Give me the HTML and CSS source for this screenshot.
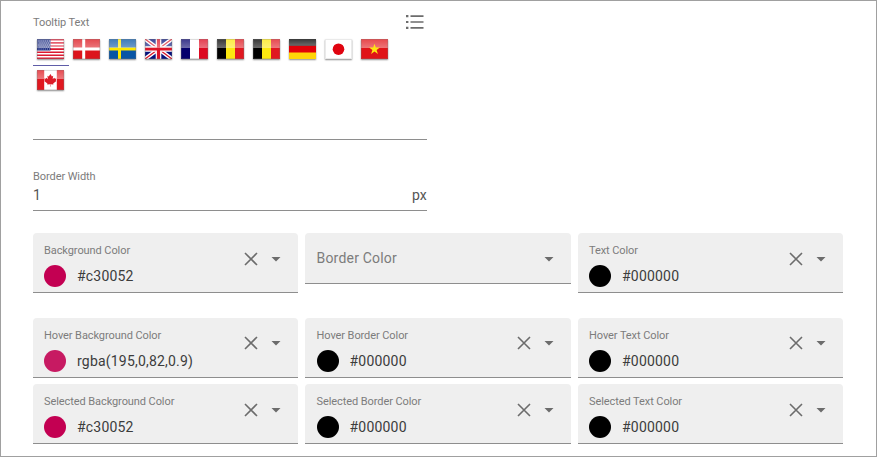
FILE: index.html
```
<!DOCTYPE html>
<html lang="en">
<head>
<meta charset="utf-8">
<title>Tooltip settings</title>
<link rel="stylesheet" href="styles.css">
</head>
<body>
<svg class="defs" aria-hidden="true">
  <defs>
    <linearGradient id="gloss" x1="0" y1="0" x2="0" y2="1">
      <stop offset="0" stop-color="#fff" stop-opacity=".22"/>
      <stop offset="1" stop-color="#fff" stop-opacity=".42"/>
    </linearGradient>
    <symbol id="shine" viewBox="0 0 27 20">
      <rect width="27" height="9" fill="url(#gloss)"/>
      <rect x=".5" y=".5" width="26" height="19" fill="none" stroke="#777" stroke-opacity=".25"/>
    </symbol>
    <symbol id="clear" viewBox="0 0 14 14"><path d="M1 1l12 12M13 1L1 13" fill="none" stroke="#6c6c6c" stroke-width="1.6"/></symbol>
    <symbol id="caret" viewBox="0 0 10 5"><path d="M.5 0h9L5 4.5z" fill="#6c6c6c"/></symbol>
  </defs>
</svg>
<main class="panel">
  <section class="tooltip-field">
    <header class="tooltip-head">
      <span class="label">Tooltip Text</span>
      <svg class="list-icon" viewBox="0 0 18 14"><path d="M0 1.2h2.4M0 7h2.4M0 12.8h2.4" stroke="#6c6c6c" stroke-width="2.2"/><path d="M4.5 1.2H17.5M4.5 7H17.5M4.5 12.8H17.5" stroke="#6c6c6c" stroke-width="1.7"/></svg>
    </header>
    <div class="flags">
      <button class="flag active"><svg viewBox="0 0 27 20"><rect width="27" height="20" fill="#fff"/><path d="M0 .8h27M0 3.9h27M0 7h27M0 10.1h27M0 13.2h27M0 16.3h27M0 19.3h27" stroke="#dc1830" stroke-width="1.6"/><rect width="13.5" height="11.5" fill="#1c2c80"/><path d="M1.5 2h12M2.5 4h11M1.5 6h12M2.5 8h11M1.5 10h12" stroke="#d0d4ee" stroke-width=".8" stroke-dasharray="1 1.1"/><use href="#shine"/></svg></button>
      <button class="flag"><svg viewBox="0 0 27 20"><rect width="27" height="20" fill="#dc141c"/><path d="M10.7 0v20M0 10h27" stroke="#fff" stroke-width="3"/><use href="#shine"/></svg></button>
      <button class="flag"><svg viewBox="0 0 27 20"><rect width="27" height="20" fill="#0855a4"/><path d="M10.5 0v20M0 10h27" stroke="#ffe800" stroke-width="3"/><use href="#shine"/></svg></button>
      <button class="flag"><svg viewBox="0 0 27 20"><rect width="27" height="20" fill="#06127c"/><path d="M0 0l27 20M27 0L0 20" stroke="#fff" stroke-width="4"/><path d="M0 0l27 20M27 0L0 20" stroke="#d81428" stroke-width="1.3"/><path d="M13.5 0v20M0 10h27" stroke="#fff" stroke-width="5.6"/><path d="M13.5 0v20M0 10h27" stroke="#dc1428" stroke-width="3.2"/><use href="#shine"/></svg></button>
      <button class="flag"><svg viewBox="0 0 27 20"><rect width="27" height="20" fill="#fff"/><rect width="9" height="20" fill="#04006c"/><rect x="18" width="9" height="20" fill="#dc0820"/><use href="#shine"/></svg></button>
      <button class="flag"><svg viewBox="0 0 27 20"><rect width="27" height="20" fill="#fce810"/><rect width="9" height="20"/><rect x="18" width="9" height="20" fill="#e01820"/><use href="#shine"/></svg></button>
      <button class="flag"><svg viewBox="0 0 27 20"><rect width="27" height="20" fill="#fce810"/><rect width="9" height="20"/><rect x="18" width="9" height="20" fill="#e01820"/><use href="#shine"/></svg></button>
      <button class="flag"><svg viewBox="0 0 27 20"><rect width="27" height="20" fill="#e00008"/><rect width="27" height="6.8"/><rect y="13.5" width="27" height="6.5" fill="#ffd408"/><rect width="27" height="6.8" fill="url(#gloss)"/></svg></button>
      <button class="flag"><svg viewBox="0 0 27 20"><rect width="27" height="20" fill="#fff"/><circle cx="13.5" cy="10.2" r="5.8" fill="#e00410"/><rect x=".5" y=".5" width="26" height="19" fill="none" stroke="#555" stroke-opacity=".12"/></svg></button>
      <button class="flag"><svg viewBox="0 0 27 20"><rect width="27" height="20" fill="#e01418"/><use href="#shine"/><path d="M13.5 4.7l1.3 3.9h4.1l-3.3 2.4 1.3 3.9-3.4-2.4-3.4 2.4 1.3-3.9-3.3-2.4h4.1z" fill="#ffe610"/></svg></button>
      <button class="flag"><svg viewBox="0 0 27 20"><rect width="27" height="20" fill="#fff"/><rect width="7.2" height="20" fill="#e01820"/><rect x="19.8" width="7.2" height="20" fill="#e01820"/><use href="#shine"/><path d="M13.5 4l1.4 2.4 1.3-.6-.5 3.3 1.7-1.4.5 1 1.4-.2-.5 2 .6.5-3.2 2.5.2 1-3-.3.2 2.3h-.6l.2-2.3-3 .3.2-1-3.2-2.5.6-.5-.5-2 1.4.2.5-1 1.7 1.4-.5-3.3 1.3.6z" fill="#dc1c28"/></svg></button>
    </div>
  </section>
  <section class="width-field">
    <span class="label">Border Width</span>
    <div class="width-row"><span>1</span><span>px</span></div>
  </section>
  <section class="colors">
    <div class="color-field">
      <div class="content"><span class="label">Background Color</span><div class="value"><i class="swatch pink"></i><span>#c30052</span></div></div>
      <svg class="clear"><use href="#clear"/></svg><svg class="caret"><use href="#caret"/></svg>
    </div>
    <div class="color-field middle empty">
      <span class="placeholder">Border Color</span><svg class="caret"><use href="#caret"/></svg>
    </div>
    <div class="color-field">
      <div class="content"><span class="label">Text Color</span><div class="value"><i class="swatch"></i><span>#000000</span></div></div>
      <svg class="clear"><use href="#clear"/></svg><svg class="caret"><use href="#caret"/></svg>
    </div>
    <div class="color-field hover">
      <div class="content"><span class="label">Hover Background Color</span><div class="value"><i class="swatch rose"></i><span>rgba(195,0,82,0.9)</span></div></div>
      <svg class="clear"><use href="#clear"/></svg><svg class="caret"><use href="#caret"/></svg>
    </div>
    <div class="color-field middle hover">
      <div class="content"><span class="label">Hover Border Color</span><div class="value"><i class="swatch"></i><span>#000000</span></div></div>
      <svg class="clear"><use href="#clear"/></svg><svg class="caret"><use href="#caret"/></svg>
    </div>
    <div class="color-field hover">
      <div class="content"><span class="label">Hover Text Color</span><div class="value"><i class="swatch"></i><span>#000000</span></div></div>
      <svg class="clear"><use href="#clear"/></svg><svg class="caret"><use href="#caret"/></svg>
    </div>
    <div class="color-field">
      <div class="content"><span class="label">Selected Background Color</span><div class="value"><i class="swatch pink"></i><span>#c30052</span></div></div>
      <svg class="clear"><use href="#clear"/></svg><svg class="caret"><use href="#caret"/></svg>
    </div>
    <div class="color-field middle">
      <div class="content"><span class="label">Selected Border Color</span><div class="value"><i class="swatch"></i><span>#000000</span></div></div>
      <svg class="clear"><use href="#clear"/></svg><svg class="caret"><use href="#caret"/></svg>
    </div>
    <div class="color-field">
      <div class="content"><span class="label">Selected Text Color</span><div class="value"><i class="swatch"></i><span>#000000</span></div></div>
      <svg class="clear"><use href="#clear"/></svg><svg class="caret"><use href="#caret"/></svg>
    </div>
  </section>
</main>
</body>
</html>
```
FILE: styles.css
```
* { box-sizing: border-box; }
body { margin: 0; font-family: Roboto, "Liberation Sans", sans-serif; background: #fff; }
.defs { display: block; width: 0; height: 0; }
.panel { width: 877px; height: 457px; padding: 13px 32px 0; border: 1px solid #a0a0a0; overflow: hidden; }
.label { display: block; height: 16px; font-size: 11px; line-height: 18px; color: #7c7c7c; letter-spacing: -.08px; white-space: nowrap; }
.tooltip-field { width: 394px; height: 126px; border-bottom: 1px solid #8e8e8e; }
.tooltip-head { display: flex; justify-content: space-between; height: 21px; }
.list-icon { width: 18px; height: 14px; margin: 1px 3px 0 0; }
.flags { display: flex; flex-wrap: wrap; width: 361px; }
.flag { display: flex; align-items: flex-start; width: 35.95px; height: 31px; padding: 4px 0 0 4.4px; border: 0; border-bottom: 1px solid transparent; background: none; }
.flag svg { display: block; width: 27px; height: 20px; box-shadow: 0 1px 1.5px rgba(0, 0, 0, .45); }
.flag.active { border-bottom-color: #5f5da8; }
.width-field { width: 394px; height: 43px; margin-top: 28px; border-bottom: 1px solid #8e8e8e; }
.width-row { display: flex; justify-content: space-between; font-size: 14px; line-height: 22px; color: #555; letter-spacing: .2px; }
.colors { display: grid; grid-template-columns: 265px 266px 265px; grid-template-rows: 79px 60px 60px; column-gap: 7px; row-gap: 6px; margin-top: 22px; }
.color-field { display: flex; align-items: flex-start; height: 60px; padding: 9px 16.6px 0 11px; background: #efefef; border-bottom: 1px solid #8e8e8e; border-radius: 4px 4px 0 0; }
.color-field.middle { padding-right: 17.4px; padding-left: 11.5px; }
.content { flex: 1; }
.value { display: flex; align-items: center; gap: 11px; height: 22px; margin-top: 7px; font-size: 14px; color: #3c3c3c; letter-spacing: .2px; }
.swatch { width: 22px; height: 22px; border-radius: 50%; background: #000; }
.swatch.pink { background: #c30052; }
.swatch.rose { background: #c71a62; }
.clear { width: 14px; height: 14px; margin-top: 10px; }
.caret { width: 10px; height: 5px; margin: 15px 0 0 13px; }
.hover .clear { margin-top: 9px; }
.hover .caret { margin-top: 14px; }
.color-field.empty { height: 51px; justify-content: space-between; }
.placeholder { font-size: 14px; line-height: 32px; color: #7c7c7c; letter-spacing: .2px; }
```
